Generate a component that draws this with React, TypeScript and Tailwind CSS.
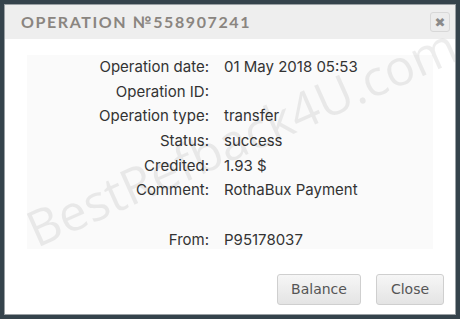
const rows: [string, string][] = [
  ['Operation date:', '01 May 2018 05:53'],
  ['Operation ID:', ''],
  ['Operation type:', 'transfer'],
  ['Status:', 'success'],
  ['Credited:', '1.93 $'],
  ['Comment:', 'RothaBux Payment'],
  ['', ''],
  ['From:', 'P95178037'],
];

export default function App() {
  return (
    <div className="w-[460px] h-[319px] bg-[#35434c] pt-[4px] pl-[4px] pr-[4px] pb-[4px]">
      <div className="h-full w-full bg-white border border-[#9aa0a4] flex flex-col overflow-hidden">
        <div className="h-[34px] bg-[#eeeeee] flex items-center justify-between pl-[16px] pr-[5px] shrink-0">
          <span className="font-['Lato',sans-serif] font-bold text-[16px] tracking-[1.6px] text-[#8a8580]">
            OPERATION №558907241
          </span>
          <button className="w-[20px] h-[20px] rounded-[3px] border border-[#d8d8d8] bg-[#ececec] flex items-center justify-center text-[#8a8a8a] text-[13px] leading-none font-['DejaVu_Sans',sans-serif]">
            ✖
          </button>
        </div>

        <div className="relative flex-1 px-[22px] pt-[16px] font-['Inter',sans-serif] text-[15px] text-[#333]">
          <div className="bg-[#fafafa] h-[194px]">
            {rows.map(([label, value], i) => (
              <div key={i} className="grid grid-cols-[182px_1fr] gap-[15px] leading-[24.7px] h-[24.7px]">
                <span className="text-right">{label}</span>
                <span>{value}</span>
              </div>
            ))}
          </div>

          <div className="pointer-events-none absolute left-[24px] top-[158px] -rotate-[24deg] origin-left whitespace-nowrap font-['Open_Sans',sans-serif] text-[50px] leading-[68px] text-black/[0.07]">
            BestRefback4U.com
          </div>

          <div className="flex justify-end gap-[15px] mt-[25px] -mr-[11px] font-['DejaVu_Sans',sans-serif] text-[14px] text-[#555]">
            <button className="w-[84px] h-[31px] rounded-[3px] border border-[#cfcfcf] bg-gradient-to-b from-[#f6f6f6] to-[#e4e4e4]">
              Balance
            </button>
            <button className="w-[68px] h-[31px] rounded-[3px] border border-[#cfcfcf] bg-gradient-to-b from-[#f6f6f6] to-[#e4e4e4]">
              Close
            </button>
          </div>
        </div>
      </div>
    </div>
  );
}
